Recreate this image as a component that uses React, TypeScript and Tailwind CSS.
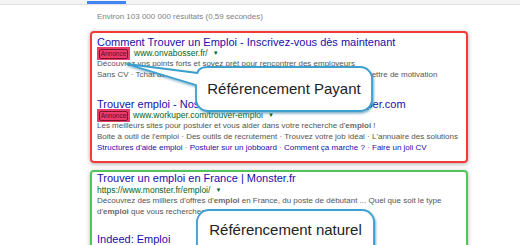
const Badge = () => (
  <span className="flex h-[13px] w-[33px] shrink-0 items-center justify-center bg-[#ec3a6c]">
    <span className="rounded-[2px] border border-[#7a1526] px-[1px] text-[6.5px] leading-[8px] text-[#5c0c1c]">
      Annonce
    </span>
  </span>
);

const Arrow = () => <span className="ml-[5px] text-[6px] text-[#006621]">▼</span>;

const Sep = () => <span className="text-[#777]"> · </span>;

export default function App() {
  return (
    <div className="relative h-[245px] w-[520px] overflow-hidden bg-white font-['Liberation_Sans',Arial,sans-serif]">
      {/* barre d'onglets */}
      <div className="flex h-[5px] border-b border-[#e2e2e2] bg-[#f4f4f4]">
        <div className="ml-[87px] mt-[1px] h-[3px] w-[39px] bg-[#4285f4]" />
      </div>

      <p className="pl-[97px] pt-[6px] text-[8px] leading-[12px] text-[#808080]">
        Environ 103 000 000 résultats (0,59 secondes)
      </p>

      {/* annonces payantes */}
      <div className="ml-[90px] mt-[8px] w-[378px] rounded-[4px] border-2 border-[#f23b3b] pb-[8px] pl-[5px] pt-[2px] shadow-[0_1px_4px_rgba(0,0,0,0.35)]">
        <div className="whitespace-nowrap">
          <h3 className="text-[11px] leading-[14px] text-[#1a0dab]">
            Comment Trouver un Emploi - Inscrivez-vous dès maintenant
          </h3>
          <div className="flex h-[9px] items-center text-[8.5px] text-[#006621]">
            <Badge />
            <span className="ml-[4px]">www.onvabosser.fr/</span>
            <Arrow />
          </div>
          <div className="text-[8px] leading-[11px] text-[#545454]">
            <p>Découvrez vos points forts et soyez prêt pour rencontrer des employeurs</p>
            <p>
              Sans CV · Tchat avec un directeur · Préparez votre entretien · Rédigez votre lettre de motivation
            </p>
          </div>
        </div>

        <div className="mt-[17px] whitespace-nowrap">
          <h3 className="text-[11px] leading-[14px] text-[#1a0dab]">
            Trouver emploi - Nos offres d'emploi en France | Workuper.com
          </h3>
          <div className="flex h-[9px] items-center text-[8.5px] text-[#006621]">
            <Badge />
            <span className="ml-[3px]">www.workuper.com/trouver-emploi</span>
            <Arrow />
          </div>
          <div className="text-[8px] leading-[11px] text-[#545454]">
            <p>
              Les meilleurs sites pour postuler et vous aider dans votre recherche d'
              <b className="text-[#6a6a6a]">emploi</b> !
            </p>
            <p>
              Boite à outil de l'emploi · Des outils de recrutement · Trouvez votre job idéal · L'annuaire des solutions
            </p>
            <p className="text-[#1a0dab]">
              Structures d'aide emploi<Sep />Postuler sur un jobboard<Sep />Comment ça marche ?<Sep />Faire un joli CV
            </p>
          </div>
        </div>
      </div>

      {/* résultats naturels */}
      <div className="ml-[90px] mt-[7px] h-[110px] w-[378px] rounded-[4px] border-2 border-[#55c35b] pl-[5px] shadow-[0_1px_4px_rgba(0,0,0,0.3)]">
        <div className="whitespace-nowrap">
          <h3 className="text-[11px] leading-[12px] text-[#1a0dab]">Trouver un emploi en France | Monster.fr</h3>
          <div className="mt-[1px] flex h-[10px] items-center text-[8.5px] text-[#006621]">
            <span>https://www.monster.fr/emploi/</span>
            <Arrow />
          </div>
          <div className="text-[8px] leading-[11px] text-[#545454]">
            <p>
              Découvrez des milliers d'offres d'<b className="text-[#6a6a6a]">emploi</b> en France, du poste de débutant ... Quel que soit le type
            </p>
            <p>
              d'<b className="text-[#6a6a6a]">emploi</b> que vous recherchez, trouvez-le sur Monster
            </p>
          </div>
          <h3 className="mt-[15px] text-[11px] leading-[14px] text-[#1a0dab]">Indeed: Emploi</h3>
        </div>
      </div>

      {/* bulles */}
      <svg className="pointer-events-none absolute left-0 top-0" width="520" height="245" viewBox="0 0 520 245">
        <defs>
          <filter id="glow" x="-20%" y="-20%" width="140%" height="140%">
            <feDropShadow dx="1" dy="1.5" stdDeviation="1.2" floodColor="#1f6f9c" floodOpacity="0.6" />
          </filter>
        </defs>
        <path
          d="M208,67 H360 A12,12 0 0 1 372,79 V99 A12,12 0 0 1 360,111 H208 A12,12 0 0 1 196,99 V85 L127,64 L197.5,73 Q198.5,67 208,67 Z"
          fill="#fff"
          stroke="#3aa0cf"
          strokeWidth="1.8"
          strokeLinejoin="round"
          filter="url(#glow)"
        />
        <path
          d="M209,210 H362 A12,12 0 0 1 374,222 V270 H197 V222 A12,12 0 0 1 209,210 Z"
          fill="#fff"
          stroke="#3aa0cf"
          strokeWidth="1.8"
          filter="url(#glow)"
        />
      </svg>
      <div className="absolute left-[196px] top-[67px] flex h-[44px] w-[176px] items-center justify-center text-[15px] text-[#222]">
        Référencement Payant
      </div>
      <div className="absolute left-[197px] top-[210px] flex h-[40px] w-[177px] items-center justify-center text-[15px] text-[#222]">
        Référencement naturel
      </div>
    </div>
  );
}
